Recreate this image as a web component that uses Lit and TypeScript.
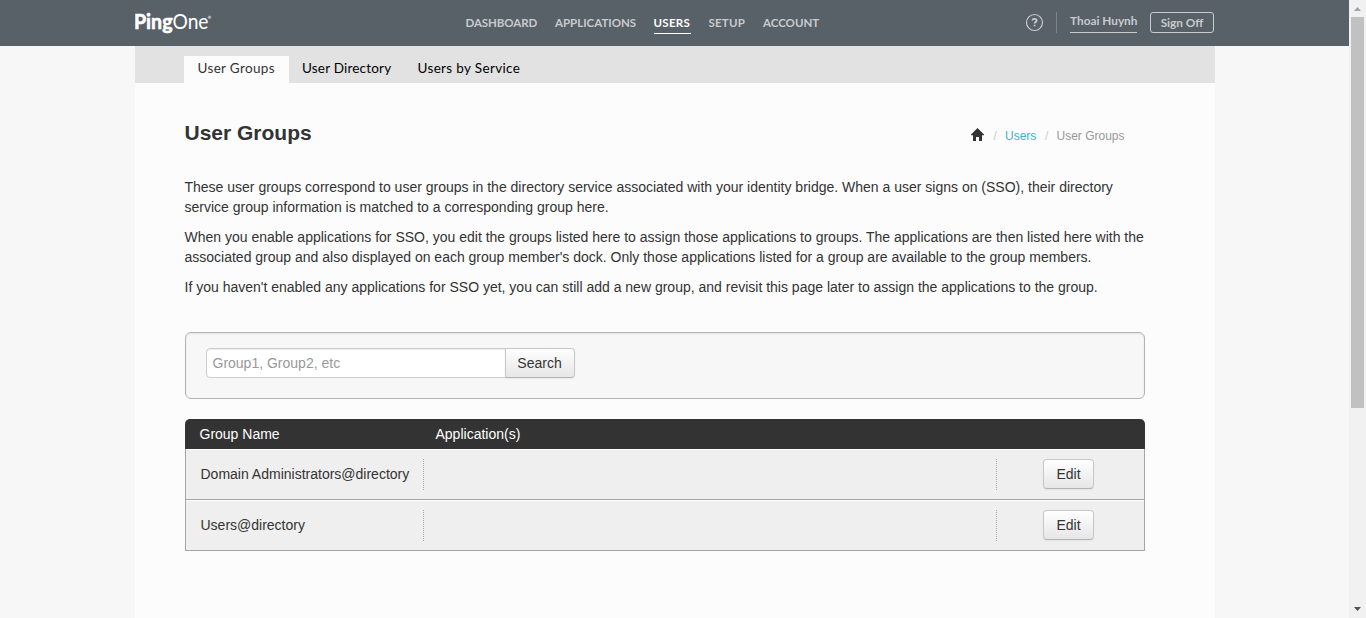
import { LitElement, html, css } from "lit";
import { customElement } from "lit/decorators.js";

const NAV = ["Dashboard", "Applications", "Users", "Setup", "Account"];
const TABS = ["User Groups", "User Directory", "Users by Service"];
const GROUPS = ["Domain Administrators@directory", "Users@directory"];

@customElement("app-header")
class AppHeader extends LitElement {
  static styles = css`
    :host { display: block; height: 46px; background: #586068; font-family: Lato, sans-serif; color: #c8cbce; }
    .inner { width: 1080px; height: 46px; margin: 0 auto; display: flex; }
    .logo { width: 331px; height: 46px; flex: none; }
    nav { display: flex; gap: 18px; padding-top: 14px; flex: 1; }
    .item { height: 19px; line-height: 18px; font-size: 11.5px; font-weight: 700; text-transform: uppercase; white-space: nowrap; border-bottom: 1px solid transparent; }
    .item.dashboard { width: 71.5px; letter-spacing: -0.08px; }
    .item.applications { width: 80.5px; }
    .item.users { width: 37px; letter-spacing: .3px; }
    .item.setup { width: 36.5px; letter-spacing: .2px; }
    .item.account { width: 57px; }
    .item.on { color: #fff; border-color: #fff; }
    .help { width: 19px; height: 19px; margin-top: 13px; }
    .rule { width: 1px; height: 21px; margin: 12px 13px 0 12px; background: #7d8389; }
    .user { width: 67px; height: 19px; margin-top: 13px; line-height: 16px; font-size: 11.8px; font-weight: 700; white-space: nowrap; border-bottom: 1px solid #c8cbce; }
    .off { box-sizing: border-box; width: 64px; height: 21px; margin: 12px .5px 0 13px; border: 1px solid #c8cbce; border-radius: 3px; background: none; color: inherit; padding: 0; font: 700 11.8px/17px Lato, sans-serif; text-align: center; }
    .lt { font-family: Lato, sans-serif; fill: #fff; }
  `;
  render() {
    return html`<div class="inner">
      <svg class="logo" viewBox="0 0 331 46">
        <text class="lt" x="-1" y="29" font-size="20.500" font-weight="700" textLength="38.500" lengthAdjust="spacingAndGlyphs" stroke="#fff" stroke-width=".6">Ping</text>
        <text class="lt" x="37.500" y="29" font-size="20.500" textLength="36" lengthAdjust="spacingAndGlyphs">One</text>
        <circle cx="74.500" cy="17.300" r="1.700" fill="#a9adb1" />
      </svg>
      <nav>${NAV.map((n) => html`<a class="item ${n.toLowerCase()} ${n === "Users" ? "on" : ""}">${n}</a>`)}</nav>
      <svg class="help" viewBox="0 0 19 19" fill="none" stroke="#c8cbce">
        <circle cx="9.500" cy="9.500" r="8" stroke-width="1.200" />
        <path d="M7.300 7.500c.3-2.300 4.400-2.300 4.400 0 0 1.500-2.100 1.500-2.100 3M9.600 11.700v1.600" stroke-width="1.700" />
      </svg>
      <div class="rule"></div>
      <div class="user">Thoai Huynh</div>
      <button class="off">Sign Off</button>
    </div>`;
  }
}

@customElement("group-table")
class GroupTable extends LitElement {
  static styles = css`
    :host { display: block; }
    .head { display: grid; grid-template-columns: 236px 1fr; height: 30px; padding-left: 15px; line-height: 30px; color: #fff; background: #333; border-radius: 5px 5px 0 0; }
    .row { box-sizing: border-box; height: 51px; display: grid; grid-template-columns: 238px 573px 1fr; align-items: center; background: #efefef; border: solid #a5a5a5; border-width: 0 1px 1px; box-shadow: inset 0 1px #fff; }
    .name { padding-left: 15px; }
    .name, .apps { box-sizing: border-box; height: 31px; margin-top: 1px; line-height: 30px; border-right: 1px dotted #aaa; }
    .act { display: flex; justify-content: center; padding-right: 4px; }
    .btn { box-sizing: border-box; width: 51px; height: 30px; padding: 0 0 0 1px; font: 14px/20px "Liberation Sans", Arial, sans-serif; color: #333; border: 1px solid #c8c8c8; border-bottom-color: #b3b3b3; border-radius: 4px; background: linear-gradient(#fff, #e6e6e6); box-shadow: inset 0 1px #fff, 0 1px 2px rgba(0,0,0,.05); }
  `;
  render() {
    return html`<div class="head"><span>Group Name</span><span>Application(s)</span></div>
      ${GROUPS.map((g) => html`<div class="row"><div class="name">${g}</div><div class="apps"></div><div class="act"><button class="btn">Edit</button></div></div>`)}`;
  }
}

@customElement("app-root")
class AppRoot extends LitElement {
  static styles = css`
    :host { display: flex; height: 618px; overflow: hidden; background: #f7f7f7; color: #333; font: 14px/20px "Liberation Sans", Arial, sans-serif; }
    .page { width: 1349px; flex: none; }
    .sheet { width: 1080px; height: 572px; margin: 0 auto; background: #fcfcfc; }
    .tabs { box-sizing: border-box; display: flex; height: 37px; padding: 10px 0 0 49.5px; background: #e2e2e2; }
    .tab { box-sizing: border-box; width: 104.5px; height: 27px; padding-left: 13.5px; font: 13.5px/25px Lato, sans-serif; letter-spacing: .34px; color: #000; white-space: nowrap; }
    .tab:first-child { background: #fcfcfc; color: #333; }
    .tab:nth-child(2) { width: 115.5px; letter-spacing: .2px; }
    .main { width: 960px; margin-left: 50px; }
    .top { display: flex; justify-content: space-between; height: 94px; }
    h1 { margin: 35px 0 0; font-size: 21px; line-height: 30px; }
    .crumbs { display: flex; width: 174px; margin-top: 43px; font-size: 12px; color: #999; white-space: nowrap; }
    .home { width: 13px; height: 13px; margin: 2px 10px 0 0; }
    .sep { color: #ccc; width: 11.5px; }
    .link { color: #3fb1cf; width: 40px; }
    p { margin: 0 0 10px; white-space: nowrap; }
    .search { box-sizing: border-box; display: flex; height: 67px; margin-top: 35px; padding: 15px 20px; border: 1px solid #b3b3b3; border-radius: 6px; background: #f7f7f7; box-shadow: inset 0 1px 2px rgba(0,0,0,.08); }
    .field { box-sizing: border-box; width: 300px; height: 30px; padding: 0 6px; border: 1px solid #ccc; border-radius: 4px 0 0 4px; background: #fff; font: inherit; box-shadow: inset 0 1px 1px rgba(0,0,0,.075); }
    .field::placeholder { color: #999; opacity: 1; }
    .go { box-sizing: border-box; width: 70px; height: 30px; margin-left: -1px; padding: 0; font: inherit; color: #333; border: 1px solid #c8c8c8; border-bottom-color: #b3b3b3; border-radius: 0 4px 4px 0; background: linear-gradient(#fff, #e6e6e6); box-shadow: inset 0 1px #fff, 0 1px 2px rgba(0,0,0,.05); }
    group-table { margin-top: 20px; }
    .scroll { width: 17px; height: 618px; background: #f1f1f1; flex: none; }
  `;
  render() {
    return html`<div class="page">
        <app-header></app-header>
        <div class="sheet">
          <div class="tabs">${TABS.map((t) => html`<a class="tab">${t}</a>`)}</div>
          <div class="main">
            <div class="top">
              <h1>User Groups</h1>
              <div class="crumbs">
                <svg class="home" viewBox="0 0 13 13"><path fill="#333" d="M6.500 0 0 6.500V7.200h2V13h3V9h3v4h3V7.200h2V6.500z" /></svg>
                <span class="sep">/</span><a class="link">Users</a><span class="sep">/</span><span>User Groups</span>
              </div>
            </div>
            <p>These user groups correspond to user groups in the directory service associated with your identity bridge. When a user signs on (SSO), their directory<br />service group information is matched to a corresponding group here.</p>
            <p>When you enable applications for SSO, you edit the groups listed here to assign those applications to groups. The applications are then listed here with the<br />associated group and also displayed on each group member's dock. Only those applications listed for a group are available to the group members.</p>
            <p>If you haven't enabled any applications for SSO yet, you can still add a new group, and revisit this page later to assign the applications to the group.</p>
            <div class="search"><input class="field" placeholder="Group1, Group2, etc" /><button class="go">Search</button></div>
            <group-table></group-table>
          </div>
        </div>
      </div>
      <svg class="scroll" viewBox="0 0 17 618">
        <path fill="#c1c1c1" d="M2 17h13v391H2z" />
        <path fill="#a3a3a3" d="M5 11h7L8.500 7z" />
        <path fill="#505050" d="M5 607h7l-3.500 4z" />
      </svg>`;
  }
}
